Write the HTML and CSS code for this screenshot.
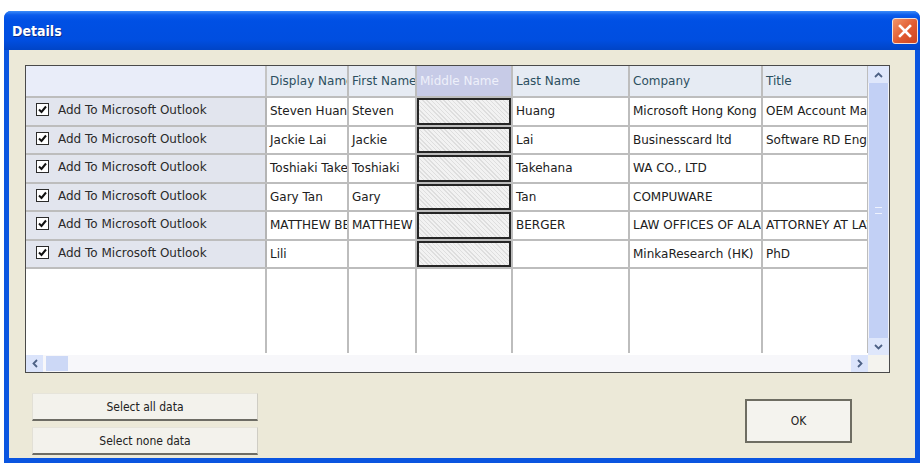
FILE: index.html
```html
<!DOCTYPE html>
<html>
<head>
<meta charset="utf-8">
<link rel="stylesheet" href="styles.css">
</head>
<body>
<div class="window">
  <div class="titlebar">
    <span class="title">Details</span>
    <div class="close">
      <svg width="14" height="14" viewBox="0 0 14 14"><path d="M2 2 L12 12 M12 2 L2 12" stroke="#fff" stroke-width="2.6" stroke-linecap="square"/></svg>
    </div>
  </div>
  <div class="body">
    <div class="frame">
      <div class="gridwrap">
        <table class="grid">
          <colgroup>
            <col class="c-rh"><col class="c-dn"><col class="c-fn"><col class="c-mn"><col class="c-ln"><col class="c-co"><col class="c-ti">
          </colgroup>
          <thead>
            <tr>
              <th class="corner"></th>
              <th>Display Name</th>
              <th>First Name</th>
              <th class="sel">Middle Name</th>
              <th>Last Name</th>
              <th>Company</th>
              <th>Title</th>
            </tr>
          </thead>
          <tbody>
            <tr>
              <td class="rh"><span class="cb"><svg width="13" height="13" viewBox="0 0 13 13"><rect x="0.5" y="0.5" width="12" height="12" fill="#fff" stroke="#2b2b2b"/><path d="M3 6.5 L5.5 9 L10 3.5" fill="none" stroke="#111" stroke-width="2"/></svg></span>Add To Microsoft Outlook</td>
              <td>Steven Huang</td><td>Steven</td><td class="mid"></td><td>Huang</td><td>Microsoft Hong Kong</td><td>OEM Account Manager</td>
            </tr>
            <tr>
              <td class="rh"><span class="cb"><svg width="13" height="13" viewBox="0 0 13 13"><rect x="0.5" y="0.5" width="12" height="12" fill="#fff" stroke="#2b2b2b"/><path d="M3 6.5 L5.5 9 L10 3.5" fill="none" stroke="#111" stroke-width="2"/></svg></span>Add To Microsoft Outlook</td>
              <td>Jackie Lai</td><td>Jackie</td><td class="mid"></td><td>Lai</td><td>Businesscard ltd</td><td>Software RD Engineer</td>
            </tr>
            <tr>
              <td class="rh"><span class="cb"><svg width="13" height="13" viewBox="0 0 13 13"><rect x="0.5" y="0.5" width="12" height="12" fill="#fff" stroke="#2b2b2b"/><path d="M3 6.5 L5.5 9 L10 3.5" fill="none" stroke="#111" stroke-width="2"/></svg></span>Add To Microsoft Outlook</td>
              <td>Toshiaki Takehana</td><td>Toshiaki</td><td class="mid"></td><td>Takehana</td><td>WA CO., LTD</td><td></td>
            </tr>
            <tr>
              <td class="rh"><span class="cb"><svg width="13" height="13" viewBox="0 0 13 13"><rect x="0.5" y="0.5" width="12" height="12" fill="#fff" stroke="#2b2b2b"/><path d="M3 6.5 L5.5 9 L10 3.5" fill="none" stroke="#111" stroke-width="2"/></svg></span>Add To Microsoft Outlook</td>
              <td>Gary Tan</td><td>Gary</td><td class="mid"></td><td>Tan</td><td>COMPUWARE</td><td></td>
            </tr>
            <tr>
              <td class="rh"><span class="cb"><svg width="13" height="13" viewBox="0 0 13 13"><rect x="0.5" y="0.5" width="12" height="12" fill="#fff" stroke="#2b2b2b"/><path d="M3 6.5 L5.5 9 L10 3.5" fill="none" stroke="#111" stroke-width="2"/></svg></span>Add To Microsoft Outlook</td>
              <td>MATTHEW BERGER</td><td>MATTHEW</td><td class="mid"></td><td>BERGER</td><td>LAW OFFICES OF ALAN</td><td>ATTORNEY AT LAW</td>
            </tr>
            <tr>
              <td class="rh"><span class="cb"><svg width="13" height="13" viewBox="0 0 13 13"><rect x="0.5" y="0.5" width="12" height="12" fill="#fff" stroke="#2b2b2b"/><path d="M3 6.5 L5.5 9 L10 3.5" fill="none" stroke="#111" stroke-width="2"/></svg></span>Add To Microsoft Outlook</td>
              <td>Lili</td><td></td><td class="mid"></td><td></td><td>MinkaResearch (HK)</td><td>PhD</td>
            </tr>
            <tr class="filler">
              <td class="rh-empty"></td><td></td><td></td><td></td><td></td><td></td><td></td>
            </tr>
          </tbody>
        </table>
      </div>
      <div class="vscroll">
        <div class="sbtn"><svg width="9" height="6" viewBox="0 0 9 6"><path d="M1 5 L4.5 1.5 L8 5" fill="none" stroke="#4d6185" stroke-width="1.8"/></svg></div>
        <div class="vthumb"><span class="grip"></span></div>
        <div class="sbtn"><svg width="9" height="6" viewBox="0 0 9 6"><path d="M1 1 L4.5 4.5 L8 1" fill="none" stroke="#4d6185" stroke-width="1.8"/></svg></div>
      </div>
      <div class="hscroll">
        <div class="hbtn"><svg width="6" height="9" viewBox="0 0 6 9"><path d="M5 1 L1.5 4.5 L5 8" fill="none" stroke="#4d6185" stroke-width="1.8"/></svg></div>
        <div class="hthumb"></div>
        <div class="htrack"></div>
        <div class="hbtn"><svg width="6" height="9" viewBox="0 0 6 9"><path d="M1 1 L4.5 4.5 L1 8" fill="none" stroke="#4d6185" stroke-width="1.8"/></svg></div>
      </div>
      <div class="sizer"></div>
    </div>
    <div class="footer">
      <div class="leftbtns">
        <button class="btn">Select all data</button>
        <button class="btn">Select none data</button>
      </div>
      <button class="btn ok">OK</button>
    </div>
  </div>
</div>
</body>
</html>
```
FILE: styles.css
```css
html, body {
  margin: 0;
  padding: 0;
  background: #ffffff;
}
body {
  font-family: "DejaVu Sans", "Liberation Sans", sans-serif;
}
.window {
  margin: 11px 0 0 4px;
  width: 916px;
  height: 452px;
  background: #0a55e0;
  border-radius: 7px 7px 0 0;
  display: flex;
  flex-direction: column;
  box-sizing: border-box;
}
.titlebar {
  height: 39px;
  flex: none;
  display: flex;
  align-items: center;
  justify-content: space-between;
  padding: 1px 2px 0 8px;
  box-sizing: border-box;
  border-radius: 7px 7px 0 0;
  background: linear-gradient(#3c8cf8 0%, #0c5cec 10%, #0050e4 25%, #004ee0 75%, #0044c6 100%);
}
.title {
  color: #ffffff;
  font-family: "DejaVu Sans Condensed", "DejaVu Sans", sans-serif;
  font-weight: bold;
  font-size: 14px;
  text-shadow: 1px 1px 0 #0a2e8a;
}
.close {
  width: 26px;
  height: 26px;
  box-sizing: border-box;
  border: 1px solid #f4e0d8;
  border-radius: 3px;
  background: linear-gradient(135deg, #f29468, #e05a30 55%, #cc4422);
  display: flex;
  align-items: center;
  justify-content: center;
}
.body {
  flex: 1;
  margin: 0 5px 5px 5px;
  background: #ece9d8;
  padding: 15px 0 0 16px;
}
.frame {
  width: 865px;
  height: 308px;
  box-sizing: border-box;
  border: 1px solid #4a4a4a;
  display: grid;
  grid-template-columns: 842px 21px;
  grid-template-rows: 289px 17px;
  background: #ffffff;
}
.gridwrap {
  overflow: hidden;
}
.grid {
  table-layout: fixed;
  border-collapse: collapse;
  width: 842px;
  font-size: 12px;
  color: #202020;
}
.c-rh { width: 240px; }
.c-dn { width: 82px; }
.c-fn { width: 68px; }
.c-mn { width: 96px; }
.c-ln { width: 117px; }
.c-co { width: 133px; }
.c-ti { width: 106px; }
.grid th, .grid td {
  padding: 0 0 0 3px;
  white-space: nowrap;
  overflow: hidden;
  text-overflow: clip;
  text-align: left;
  border-right: 2px solid #bdbdbd;
  border-bottom: 2px solid #bdbdbd;
}
.grid th {
  height: 30px;
  font-weight: normal;
  color: #2c4f60;
  background: #e6ebf3;
  border-top: 0;
}
.grid th.corner {
  background: #e9edf9;
  border-right: 2px solid #c4c4c4;
}
.grid th.sel {
  background: #c7cbe7;
  color: #eef0fa;
}
.grid td {
  height: 26.5px;
  background: #ffffff;
}
.grid td.rh {
  background: #e2e5ee;
  color: #2a2a2a;
  padding-left: 10px;
  border-right: 2px solid #b4b4b4;
}
.cb {
  display: inline-block;
  vertical-align: -2px;
  margin-right: 9px;
}
.grid td.mid {
  background: repeating-linear-gradient(45deg, #dedede 0 1px, #f2f2f2 1px 3px);
  box-shadow: inset 0 0 0 2px #262626;
}
.grid tr.filler td {
  height: 84px;
  border-bottom: 0;
}
.grid tr.filler td.rh-empty {
  background: #ffffff;
}
.vscroll {
  display: flex;
  flex-direction: column;
  background: #f2f3f8;
}
.sbtn {
  height: 17px;
  flex: none;
  background: #dfe7fb;
  display: flex;
  align-items: center;
  justify-content: center;
}
.vthumb {
  flex: 1;
  margin: 0 1px;
  background: #c2d0f5;
  display: flex;
  align-items: center;
  justify-content: center;
}
.grip {
  width: 7px;
  height: 5px;
  border-top: 1px solid #eef2fd;
  border-bottom: 1px solid #eef2fd;
}
.hscroll {
  display: flex;
  background: #f7f7fa;
}
.hbtn {
  width: 17px;
  flex: none;
  background: #dbe4fb;
  display: flex;
  align-items: center;
  justify-content: center;
}
.hthumb {
  width: 22px;
  margin: 1px 0 1px 3px;
  background: #ccd8f6;
}
.htrack {
  flex: 1;
}
.sizer {
  background: #f4f3ee;
}
.footer {
  width: 865px;
  margin-top: 20px;
  padding-left: 7px;
  box-sizing: border-box;
  display: flex;
  justify-content: space-between;
  align-items: flex-start;
}
.leftbtns {
  display: flex;
  flex-direction: column;
  gap: 6px;
}
.btn {
  font-family: "DejaVu Sans Condensed", "DejaVu Sans", sans-serif;
  font-size: 12px;
  color: #222;
  background: #f3f2ec;
  border: 0;
  border-top: 1px solid #e6e4da;
  border-left: 1px solid #e2e0d6;
  border-bottom: 2px solid #6d6c64;
  border-right: 1px solid #cfcdc4;
  width: 226px;
  height: 28px;
  padding: 0;
}
.btn.ok {
  width: 107px;
  height: 44px;
  margin-top: 6px;
  margin-right: 38px;
  border: 2px solid #6e6d62;
  background: #f4f3ee;
}
```
